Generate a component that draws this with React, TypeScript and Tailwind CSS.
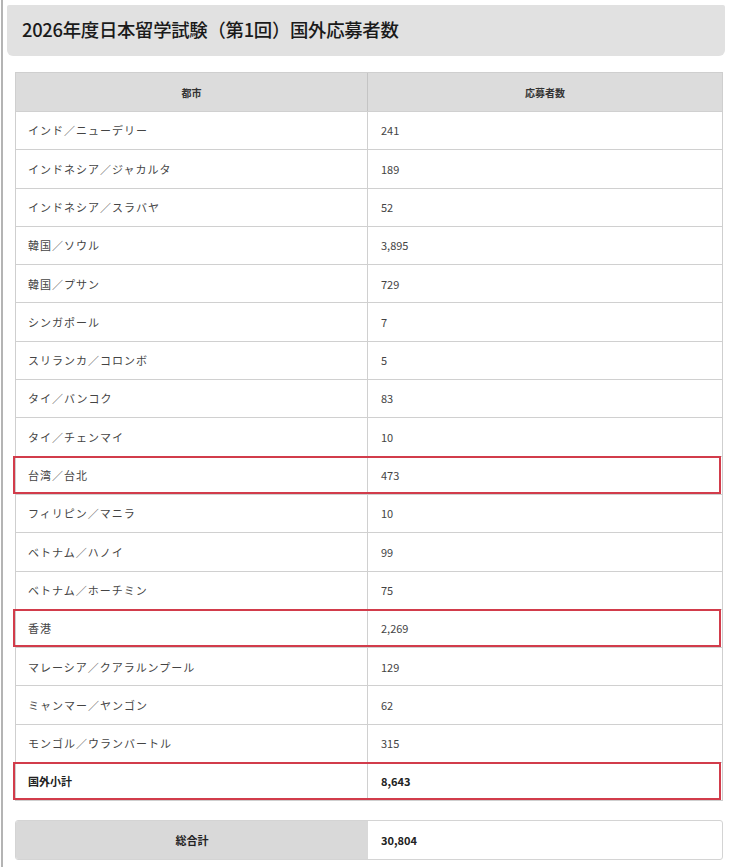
const rows: [string, string][] = [
  ['インド／ニューデリー', '241'],
  ['インドネシア／ジャカルタ', '189'],
  ['インドネシア／スラバヤ', '52'],
  ['韓国／ソウル', '3,895'],
  ['韓国／プサン', '729'],
  ['シンガポール', '7'],
  ['スリランカ／コロンボ', '5'],
  ['タイ／バンコク', '83'],
  ['タイ／チェンマイ', '10'],
  ['台湾／台北', '473'],
  ['フィリピン／マニラ', '10'],
  ['ベトナム／ハノイ', '99'],
  ['ベトナム／ホーチミン', '75'],
  ['香港', '2,269'],
  ['マレーシア／クアラルンプール', '129'],
  ['ミャンマー／ヤンゴン', '62'],
  ['モンゴル／ウランバートル', '315'],
]

const marked = ['台湾／台北', '香港']

export default function App() {
  return (
    <div
      className="min-h-screen bg-white"
      style={{ fontFamily: '"Noto Sans CJK JP", "Noto Sans", sans-serif' }}
    >
      <div className="ml-[1px] min-h-[867px] border-l-2 border-[#b4b4b4] pt-[5px] pb-[6px]">
        {/* Title */}
        <div className="ml-[4px] mr-[4px] flex h-[51px] items-center rounded-b-[6px] rounded-t-[2px] bg-[#e1e1e1] pb-[2px] pl-[15px]">
          <h1 className="text-[18.4px] font-medium tracking-[-0.3px] text-[#1a1a1a]">
            2026年度日本留学試験（第1回）国外応募者数
          </h1>
        </div>

        {/* Table */}
        <div className="ml-[12px] mr-[6px] mt-[16px] border border-[#cfcfcf] text-[11px] text-[#444]">
          <div className="grid h-[38px] grid-cols-[352px_1fr] bg-[#dcdcdc] font-bold text-[#333]">
            <div className="flex items-center justify-center border-r border-[#c4c4c4] text-[10px]">都市</div>
            <div className="flex items-center justify-center text-[10px]">応募者数</div>
          </div>
          {rows.map(([city, n]) => (
            <div key={city} className="relative grid h-[38.3px] grid-cols-[352px_1fr] border-t border-[#d0d0d0]">
              <div className="flex items-center border-r border-[#d0d0d0] pl-[12px] tracking-[1px]">{city}</div>
              <div className="flex items-center pl-[13px]">{n}</div>
              {marked.includes(city) && (
                <div className="pointer-events-none absolute -left-[3px] right-[1px] -top-[1px] bottom-[0px] border-2 border-[#d23c4b]" />
              )}
            </div>
          ))}
          <div className="relative grid h-[38.3px] grid-cols-[352px_1fr] border-t border-[#d0d0d0] font-bold text-[#222]">
            <div className="flex items-center border-r border-[#d0d0d0] pl-[12px]">国外小計</div>
            <div className="flex items-center pl-[13px]">8,643</div>
            <div className="pointer-events-none absolute -left-[3px] right-[1px] -top-[1px] bottom-[0px] border-2 border-[#d23c4b]" />
          </div>
        </div>

        {/* Grand total */}
        <div className="ml-[12px] mr-[6px] mt-[19px] grid h-[40px] grid-cols-[352px_1fr] overflow-hidden rounded-[3px] border border-[#d4d4d4] text-[11px] font-bold text-[#222]">
          <div className="flex items-center justify-center bg-[#d9d9d9]">総合計</div>
          <div className="flex items-center pl-[13px]">30,804</div>
        </div>
      </div>
    </div>
  )
}
